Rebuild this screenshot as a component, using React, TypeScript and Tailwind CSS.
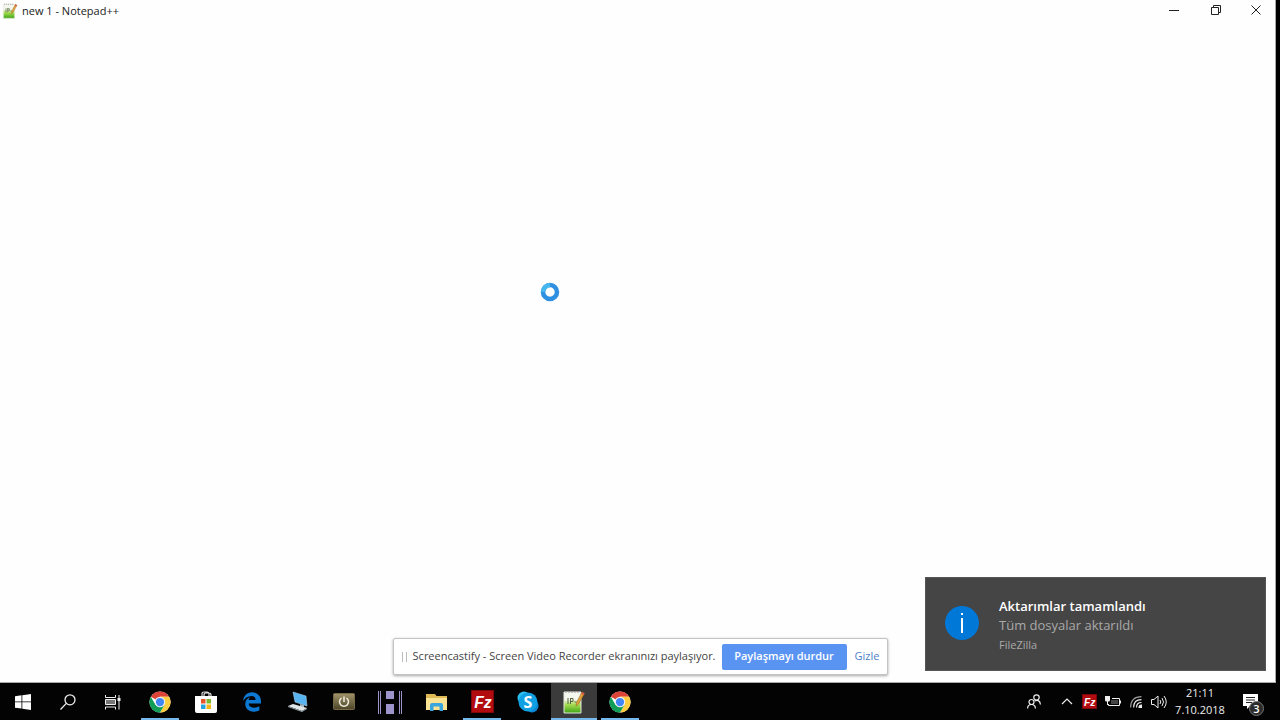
import React from 'react';
import { FaEdgeLegacy } from 'react-icons/fa6';

const NotepadIcon = ({ className }: { className?: string }) => (
  <svg viewBox="0 0 22 24" className={className} aria-hidden="true">
    <defs>
      <linearGradient id="np" x1="0" y1="0" x2="0" y2="1">
        <stop offset="0.35" stopColor="#f4f7ee" />
        <stop offset="0.6" stopColor="#a5dc52" />
        <stop offset="1" stopColor="#3fa414" />
      </linearGradient>
    </defs>
    <path d="M1 2h17v21H1z" fill="url(#np)" stroke="#e4e9dd" />
    <path
      d="M3 1v2M6 1v2M9 1v2M12 1v2M15 1v2"
      stroke="#999"
      strokeWidth="1"
    />
    <path
      d="M5 8v6M7.500 8v6M7 8.500h3v3H8M11.500 12h2M14.500 12h2"
      stroke="#55603f"
      strokeWidth="1"
      fill="none"
    />
    <path d="M19 2l2.500 1.500L15.500 14l-2.500 2 .5-3.500z" fill="#e2a23b" stroke="#8b5d20" strokeWidth=".5" />
    <path d="M19 2l2.500 1.500-1 1.700L18 3.700z" fill="#d65d45" />
  </svg>
);

const ChromeIcon = () => (
  <svg viewBox="0 0 48 48" className="size-[22px]" aria-hidden="true">
    <circle cx="24" cy="24" r="23" fill="#fff" />
    <path d="M24 24 4.080 12.500A23 23 0 0 1 43.920 12.500H24z" fill="#db4437" />
    <path d="M43.920 12.500A23 23 0 0 1 24 47l9.960-17.250L24 12.500z" fill="#ffcd40" />
    <path d="M4.080 12.500A23 23 0 0 0 24 47l9.960-17.250L14.040 29.750z" fill="#0f9d58" />
    <circle cx="24" cy="24" r="11.500" fill="#f1f1f1" />
    <circle cx="24" cy="24" r="9" fill="#4285f4" />
  </svg>
);

const StoreIcon = () => (
  <svg viewBox="0 0 22 22" className="size-[22px]" aria-hidden="true">
    <path d="M7 6V3q0-2 2-2h3q2 0 2 2v3M9 6V4q0-2 2-2h3q2 0 2 2v2" fill="none" stroke="#ddd" strokeWidth="1.200" />
    <path d="M0 5h22v15q0 2-2 2H2q-2 0-2-2z" fill="#fff" />
    <path d="M6 8h4.500v4.500H6z" fill="#e8532b" />
    <path d="M11.500 8H16v4.500h-4.500z" fill="#7cb82f" />
    <path d="M6 13.500h4.500V18H6z" fill="#28a3e2" />
    <path d="M11.500 13.500H16V18h-4.500z" fill="#f5b519" />
  </svg>
);

const RemoteIcon = () => (
  <svg viewBox="0 0 22 22" className="size-[22px]" aria-hidden="true">
    <path d="M6 1l13 4 1 10L8 11z" fill="#57b4f1" stroke="#b9dcf2" strokeWidth=".5" />
    <path d="M13 13l4 1v3l-4-1z" fill="#9fb2bd" />
    <path d="M1 15l5-2 14 4-5 3z" fill="#e1e6e8" />
    <path d="M1 15v1l14 5 5-3v-1l-5 3z" fill="#9ba6ac" />
  </svg>
);

const PowerIcon = () => (
  <svg viewBox="0 0 22 17" className="h-[17px] w-[22px]" aria-hidden="true">
    <defs>
      <linearGradient id="pw" x1="0" y1="0" x2="0" y2="1">
        <stop offset="0" stopColor="#a09469" />
        <stop offset="1" stopColor="#4c4428" />
      </linearGradient>
    </defs>
    <rect x=".5" y=".5" width="21" height="16" rx="1" fill="url(#pw)" stroke="#746a45" />
    <path d="M8.500 5a4.500 4.500 0 1 0 5 0M11 3.500V9" fill="none" stroke="#f2efdf" strokeWidth="1.500" />
  </svg>
);

const HeidiIcon = () => (
  <svg viewBox="0 0 24 24" className="size-[24px]" fill="#9c94cb" aria-hidden="true">
    <path d="M0 1h1v23H0zM2 1h1v23H2zM23 1h1v23h-1zM21 1h1v23h-1zM8 1h8v8H8zM8 14h8v10H8z" />
  </svg>
);

const FolderIcon = () => (
  <svg viewBox="0 0 21 18" className="h-[18px] w-[21px]" aria-hidden="true">
    <path d="M0 1h9l1.500 2H21v13H0z" fill="#dfb956" />
    <path d="M1 5h20v12H0V5z" fill="#fbe394" />
    <path d="M4 18v-6q0-2 2-2h9q2 0 2 2v6h-3.500v-4.500h-6V18z" fill="#3ba5dd" />
  </svg>
);

const FileZillaIcon = ({ className }: { className?: string }) => (
  <svg viewBox="0 0 22 22" className={className} aria-hidden="true">
    <rect x=".5" y=".5" width="21" height="21" fill="#b20c10" stroke="#80080a" />
    <text x="3" y="17" fontFamily="Liberation Sans, sans-serif" fontSize="15" fontWeight="700" fontStyle="italic" fill="#fff">
      Fz
    </text>
  </svg>
);

const SkypeIcon = () => (
  <svg viewBox="0 0 22 22" className="size-[22px]" aria-hidden="true">
    <circle cx="7" cy="7" r="6.500" fill="#2ac0f0" />
    <circle cx="15" cy="15" r="6.500" fill="#0b86d6" />
    <circle cx="11" cy="11" r="9.500" fill="#109fe2" />
    <text x="11" y="17" textAnchor="middle" fontFamily="Open Sans, sans-serif" fontSize="16" fontWeight="700" fill="#fff">
      S
    </text>
  </svg>
);

const apps = [
  { name: 'Google Chrome', icon: <ChromeIcon />, open: true },
  { name: 'Microsoft Store', icon: <StoreIcon /> },
  { name: 'Microsoft Edge', icon: <FaEdgeLegacy className="size-[20px] text-[#0d78d3]" /> },
  { name: 'Remote', icon: <RemoteIcon /> },
  { name: 'Power', icon: <PowerIcon /> },
  { name: 'HeidiSQL', icon: <HeidiIcon /> },
  { name: 'Explorer', icon: <FolderIcon /> },
  { name: 'FileZilla', icon: <FileZillaIcon className="size-[23px]" />, open: true },
  { name: 'Skype', icon: <SkypeIcon /> },
  { name: 'Notepad++', icon: <NotepadIcon className="h-[24px] w-[22px]" />, open: true, active: true },
  { name: 'Google Chrome', icon: <ChromeIcon />, open: true },
];

const TitleBar = () => (
  <header className="flex h-[22px] items-center justify-between">
    <div className="flex items-center gap-1 pl-0.5">
      <NotepadIcon className="size-4" />
      <h1 className="text-[11px] text-[#222]">new 1 - Notepad++</h1>
    </div>
    <div className="flex h-5 self-start text-[#222]">
      <button aria-label="Simge durumuna küçült" className="grid w-[42px] place-items-center">
        <svg viewBox="0 0 10 10" className="size-[10px]" stroke="currentColor">
          <path d="M0 5.500h10" />
        </svg>
      </button>
      <button aria-label="Önceki boyut" className="grid w-[42px] place-items-center">
        <svg viewBox="0 0 10 10" className="size-[10px]" fill="none" stroke="currentColor">
          <path d="M.5 2.500h7v7h-7zM2.500 2.500v-2h7v7h-2" />
        </svg>
      </button>
      <button aria-label="Kapat" className="grid w-[38px] place-items-center">
        <svg viewBox="0 0 10 10" className="size-[10px]" stroke="currentColor">
          <path d="M.5.5l9 9M9.500.5l-9 9" />
        </svg>
      </button>
    </div>
  </header>
);

const ShareBar = () => (
  <div className="flex h-[37px] items-center rounded-xs border border-[#c4c4c4] bg-white px-2 text-[11px] shadow-[0_1px_3px_rgba(0,0,0,0.35)]">
    <span className="h-[10px] w-[5px] border-x border-[#bbb]" />
    <p className="ml-1.5 text-[#444]">
      Screencastify - Screen Video Recorder ekranınızı paylaşıyor.
    </p>
    <button className="ml-1.5 h-[26px] w-[125px] rounded-xs bg-[#5a94f2] font-semibold text-white">
      Paylaşmayı durdur
    </button>
    <a href="#" className="ml-2 text-[#4f7fc8]">
      Gizle
    </a>
  </div>
);

const Toast = () => (
  <div
    role="status"
    className="flex h-[94px] w-[341px] items-center gap-5 border border-[#555] bg-[#454545] pt-0.5 pl-[19px]"
  >
    <svg viewBox="0 0 34 34" className="mb-1 size-[34px]" aria-hidden="true">
      <circle cx="17" cy="17" r="17" fill="#0078d7" />
      <path d="M17 7v2M17 12v15" stroke="#fff" strokeWidth="2" />
    </svg>
    <div className="leading-[19px]">
      <p className="text-[13px] font-semibold text-white">Aktarımlar tamamlandı</p>
      <p className="text-[13px] text-[#a9a9a9]">Tüm dosyalar aktarıldı</p>
      <p className="text-[11px] text-[#a9a9a9]">FileZilla</p>
    </div>
  </div>
);

const Taskbar = () => (
  <footer className="flex h-[37px] items-stretch justify-between bg-[#030303] pr-1 text-[#eee]">
    <nav className="flex">
      <button aria-label="Başlat" className="grid w-[45px] place-items-center">
        <svg viewBox="0 0 16 16" className="size-4" fill="#fff">
          <path d="M0 2.200 6.500 1.300v6.200H0zM7.300 1.200 16 0v7.500H7.300zM0 8.300h6.500v6.200L0 13.700zM7.300 8.300H16V16l-8.700-1.200z" />
        </svg>
      </button>
      <button aria-label="Ara" className="grid w-[45px] place-items-center">
        <svg viewBox="0 0 16 16" className="size-4" fill="none" stroke="currentColor" strokeWidth="1.300">
          <circle cx="10" cy="5.800" r="5" />
          <path d="M6.300 9.400.5 15.500" />
        </svg>
      </button>
      <button aria-label="Görev görünümü" className="grid w-[45px] place-items-center">
        <svg viewBox="0 0 16 16" className="size-4" fill="none" stroke="currentColor">
          <path d="M.5 1v2.500h10V1M.5 15.500V13h10v2.500M14 1v14.500" />
          <path d="M.5 5.500h10v5H.5z" fill="#777" />
          <path d="M12.500 5.500h3" strokeWidth="3" />
        </svg>
      </button>
      <div className="ml-0.5 flex">
        {apps.map((app, i) => (
          <button
            key={i}
            aria-label={app.name}
            className={`relative grid w-[46px] place-items-center ${app.active ? 'bg-[#3b3b3b]' : ''}`}
          >
            {app.icon}
            {app.open && (
              <span
                className={`absolute bottom-0 h-0.5 bg-[#76b9ed] ${app.active ? 'inset-x-0' : 'inset-x-1'}`}
              />
            )}
          </button>
        ))}
      </div>
    </nav>
    <div className="flex items-stretch">
      <button aria-label="Kişiler" className="grid w-[42px] place-items-center">
        <svg viewBox="0 0 14 15" className="h-[15px] w-[14px]" fill="none" stroke="currentColor" strokeWidth="1.200">
          <circle cx="9.500" cy="3.500" r="2.700" />
          <circle cx="4.500" cy="8" r="2.500" />
          <path d="M.6 14.500q0-4 3.900-4t3.900 4M7.500 7q5.500-2 5.900 3.500" />
        </svg>
      </button>
      <button aria-label="Gizli simgeler" className="grid w-[23px] place-items-center">
        <svg viewBox="0 0 12 7" className="h-[7px] w-3" fill="none" stroke="currentColor" strokeWidth="1.200">
          <path d="M1 6l5-5 5 5" />
        </svg>
      </button>
      <button aria-label="FileZilla" className="grid w-[23px] place-items-center">
        <FileZillaIcon className="size-[15px]" />
      </button>
      <button aria-label="Pil" className="grid w-[23px] place-items-center">
        <svg viewBox="0 0 16 12" className="h-3 w-4" fill="none" stroke="currentColor">
          <path d="M7 2.500h7.500v7h-11V8M15.500 4.500v3" />
          <path d="M6 4h7v4H6z" fill="#444" stroke="none" />
          <path d="M0 0h5v4q0 1.500-1.500 1.500h-2Q0 5.500 0 4z" fill="currentColor" stroke="none" />
          <path d="M2.500 5v4" />
        </svg>
      </button>
      <button aria-label="Ağ" className="grid w-[23px] place-items-center">
        <svg viewBox="0 0 12 12" className="size-3" fill="none" stroke="currentColor" strokeWidth="1.100">
          <path d="M.6 11.500Q.6.600 11.500.6" stroke="#999" />
          <path d="M3.600 11.500q0-7.900 7.900-7.900M6.500 11.500q0-5 5-5" />
          <path d="M9 11.500q0-2.500 2.500-2.500v2.500z" fill="currentColor" />
        </svg>
      </button>
      <button aria-label="Ses" className="grid w-[23px] place-items-center">
        <svg viewBox="0 0 16 14" className="h-[14px] w-4" fill="none" stroke="currentColor">
          <path d="M.5 4.500H3l4-3.500v12L3 9.500H.5zM9 5q1.500 2 0 4M11 3q3 4 0 8M13 1q4.500 6 0 12" />
        </svg>
      </button>
      <div className="flex w-[60px] flex-col items-center justify-center pb-0.5 text-[11px] leading-[17px]">
        <time>21:11</time>
        <time>7.10.2018</time>
      </div>
      <button aria-label="Bildirimler" className="relative grid w-[46px] place-items-center">
        <svg viewBox="0 0 15 15" className="mr-1.5 size-[15px]" aria-hidden="true">
          <path d="M0 0h15v12H7l-3 3v-3H0z" fill="#fff" />
          <path d="M3 3.500h9M3 6h9M3 8.500h6" stroke="#222" />
        </svg>
        <span className="absolute right-3 bottom-1 grid size-[15px] place-items-center rounded-full border border-[#777] bg-[#2b2b2b] text-[11px] leading-none font-semibold text-white">
          3
        </span>
      </button>
    </div>
  </footer>
);

export default function App() {
  return (
    <div className="flex h-screen flex-col bg-black font-['Open_Sans','Noto_Sans',sans-serif]">
      <main className="relative mr-1 flex-1 border-r border-b border-[#aaa] bg-[#fefefe]">
        <TitleBar />
        {/* busy cursor */}
        <svg viewBox="0 0 20 20" className="absolute top-[282px] left-[540px] size-5" aria-hidden="true">
          <circle cx="10" cy="10" r="7" fill="none" stroke="#2f8fe0" strokeWidth="4.500" />
          <path d="M3 10a7 7 0 0 1 7-7" fill="none" stroke="#45b6ee" strokeWidth="4.500" />
        </svg>
        <div className="absolute inset-x-0 bottom-[7px] flex justify-center pl-1.5">
          <ShareBar />
        </div>
        <div className="absolute right-[9px] bottom-[11px]">
          <Toast />
        </div>
      </main>
      <Taskbar />
    </div>
  );
}
